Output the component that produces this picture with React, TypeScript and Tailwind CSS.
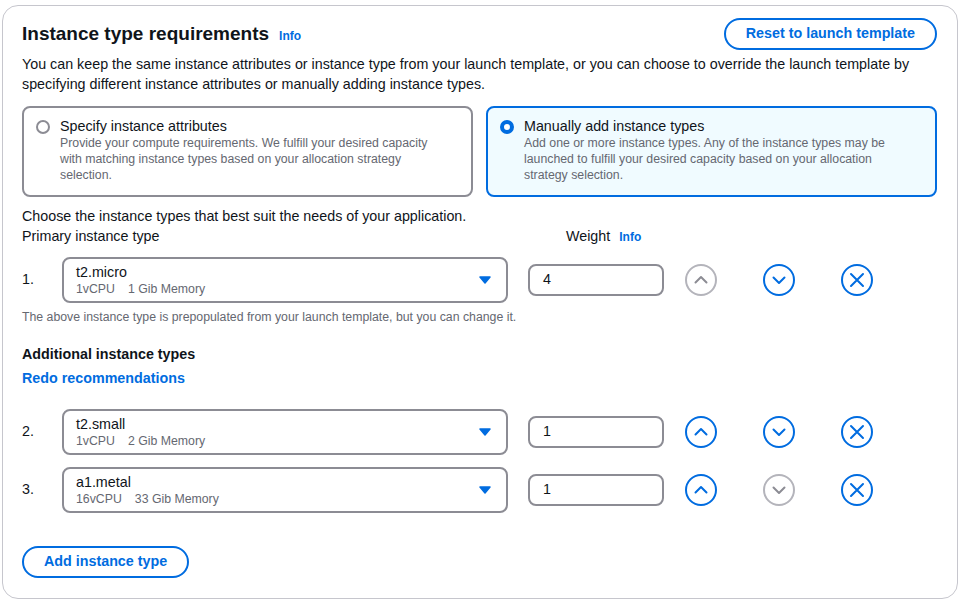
import React from 'react'

const blue = '#006ce0'

function Caret() {
  return (
    <svg width="12" height="8" viewBox="0 0 12 8" className="shrink-0">
      <path d="M1 1 L11 1 L6 7 Z" fill={blue} stroke={blue} strokeWidth="1.5" strokeLinejoin="round" />
    </svg>
  )
}

function CircleIcon({ kind, disabled }: { kind: 'up' | 'down' | 'x'; disabled?: boolean }) {
  const ring = disabled ? '#b4b4bb' : blue
  const mark = disabled ? '#8c8c94' : blue
  return (
    <svg width="32" height="32" viewBox="0 0 32 32" className="shrink-0">
      <circle cx="16" cy="16" r="15" fill="none" stroke={ring} strokeWidth="2" />
      {kind === 'up' && <path d="M10.5 18.5 L16 13 L21.5 18.5" fill="none" stroke={mark} strokeWidth="2" strokeLinecap="round" strokeLinejoin="round" />}
      {kind === 'down' && <path d="M10.5 13.5 L16 19 L21.5 13.5" fill="none" stroke={mark} strokeWidth="2" strokeLinecap="round" strokeLinejoin="round" />}
      {kind === 'x' && <path d="M10 10 L22 22 M22 10 L10 22" fill="none" stroke={mark} strokeWidth="2" strokeLinecap="round" />}
    </svg>
  )
}

type Row = {
  n: string
  name: string
  cpu: string
  mem: string
  weight: string
  upDisabled?: boolean
  downDisabled?: boolean
}

function TypeRow({ row }: { row: Row }) {
  return (
    <div className="flex items-center">
      <div className="w-[40px] text-[14.3px] text-[#0f141a]">{row.n}</div>
      <div className="flex h-[46px] w-[446px] items-center justify-between rounded-[8px] border-2 border-[#8c8c94] pl-[12px] pr-[15px]">
        <div className="flex flex-col">
          <span className="text-[14.3px] leading-[18px] text-[#0f141a]">{row.name}</span>
          <span className="text-[12.3px] leading-[16px] text-[#656871]">
            {row.cpu}
            <span className="ml-[13px]">{row.mem}</span>
          </span>
        </div>
        <Caret />
      </div>
      <div className="ml-[20px] flex h-[32px] w-[136px] items-center rounded-[8px] border-2 border-[#8c8c94] pl-[13px] text-[14.3px] text-[#0f141a]">
        {row.weight}
      </div>
      <div className="ml-[21px] flex items-center gap-[46px]">
        <CircleIcon kind="up" disabled={row.upDisabled} />
        <CircleIcon kind="down" disabled={row.downDisabled} />
        <CircleIcon kind="x" />
      </div>
    </div>
  )
}

export default function App() {
  return (
    <div className="h-[601px] w-[964px] bg-white pl-[2px] pt-[5px]" style={{ fontFamily: '"Liberation Sans", Arial, sans-serif' }}>
      <div className="h-[594px] w-[956px] rounded-[16px] border border-[#c6c6cd] pl-[19px] pr-[20px] pt-[12px] text-[#0f141a]">
        <div className="flex items-center justify-between">
          <div className="flex items-baseline gap-[10px]">
            <h2 className="text-[19px] font-bold leading-[24px]">Instance type requirements</h2>
            <span className="text-[12px] font-bold text-[#006ce0]">Info</span>
          </div>
          <button className="h-[32px] rounded-full border-2 border-[#006ce0] px-[20px] text-[14.3px] font-bold text-[#006ce0]">
            Reset to launch template
          </button>
        </div>
        <p className="mt-[4px] text-[14.3px] leading-[20px]">
          You can keep the same instance attributes or instance type from your launch template, or you can choose to override the launch template by specifying different instance attributes or manually adding instance types.
        </p>

        <div className="mt-[12px] grid grid-cols-2 gap-[13px]">
          <div className="flex h-[91px] items-start gap-[10px] rounded-[8px] border-2 border-[#8c8c94] pl-[12px] pr-[24px] pt-[9px]">
            <span className="mt-[3px] h-[14px] w-[14px] shrink-0 rounded-full border-2 border-[#8c8c94] bg-white" />
            <div>
              <div className="text-[14.3px] leading-[18px]">Specify instance attributes</div>
              <div className="text-[12.3px] leading-[16px] text-[#656871]">
                Provide your compute requirements. We fulfill your desired capacity with matching instance types based on your allocation strategy selection.
              </div>
            </div>
          </div>
          <div className="flex h-[91px] items-start gap-[10px] rounded-[8px] border-2 border-[#006ce0] bg-[#f0fbff] pl-[12px] pr-[24px] pt-[9px]">
            <span className="mt-[3px] h-[14px] w-[14px] shrink-0 rounded-full border-[4px] border-[#006ce0] bg-white" />
            <div>
              <div className="text-[14.3px] leading-[18px]">Manually add instance types</div>
              <div className="text-[12.3px] leading-[16px] text-[#656871]">
                Add one or more instance types. Any of the instance types may be launched to fulfill your desired capacity based on your allocation strategy selection.
              </div>
            </div>
          </div>
        </div>

        <p className="mt-[9px] text-[14.3px] leading-[20px]">Choose the instance types that best suit the needs of your application.</p>
        <div className="flex text-[14.3px] leading-[20px]">
          <span className="w-[544px]">Primary instance type</span>
          <span className="flex items-baseline gap-[9px]">
            Weight
            <span className="text-[12px] font-bold text-[#006ce0]">Info</span>
          </span>
        </div>

        <div className="mt-[10px]">
          <TypeRow row={{ n: '1.', name: 't2.micro', cpu: '1vCPU', mem: '1 Gib Memory', weight: '4', upDisabled: true }} />
        </div>
        <p className="mt-[6px] text-[12.3px] leading-[16px] text-[#656871]">
          The above instance type is prepopulated from your launch template, but you can change it.
        </p>

        <h3 className="mt-[19px] text-[14.3px] font-bold leading-[20px]">Additional instance types</h3>
        <div className="mt-[4px] text-[14.3px] font-bold leading-[20px] text-[#006ce0]">Redo recommendations</div>

        <div className="mt-[21px] flex flex-col gap-[12px]">
          <TypeRow row={{ n: '2.', name: 't2.small', cpu: '1vCPU', mem: '2 Gib Memory', weight: '1' }} />
          <TypeRow row={{ n: '3.', name: 'a1.metal', cpu: '16vCPU', mem: '33 Gib Memory', weight: '1', downDisabled: true }} />
        </div>

        <button className="mt-[33px] h-[32px] rounded-full border-2 border-[#006ce0] px-[20px] text-[14.3px] font-bold text-[#006ce0]">
          Add instance type
        </button>
      </div>
    </div>
  )
}
